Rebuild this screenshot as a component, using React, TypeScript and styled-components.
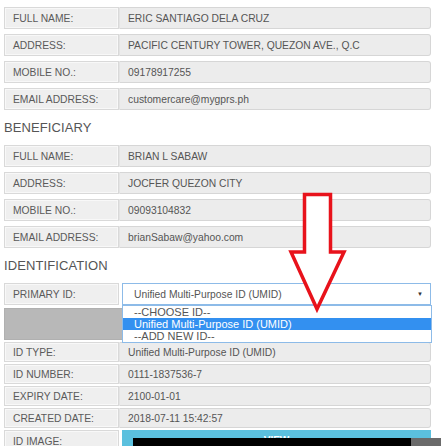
import React from "react";
import styled, { createGlobalStyle } from "styled-components";

const GlobalStyle = createGlobalStyle`
  html, body { margin: 0; padding: 0; background: #fff; overflow: hidden; }
  body { font-family: "Liberation Sans", Arial, sans-serif; }
`;

const Page = styled.div`
  position: relative;
  width: 441px;
  height: 446px;
  overflow: hidden;
  padding: 7px 10px 0 4px;
  box-sizing: border-box;
`;

const Fields = styled.div<{ $gap: number }>`
  display: flex;
  flex-direction: column;
  gap: ${(p) => p.$gap}px;
`;

const Row = styled.div<{ $h: number; $gap?: number }>`
  display: grid;
  grid-template-columns: 115px 1fr;
  column-gap: ${(p) => p.$gap ?? 0}px;
  height: ${(p) => p.$h}px;
`;

const Label = styled.div`
  display: flex;
  align-items: center;
  padding-left: 8px;
  box-sizing: border-box;
  border: 1px solid #d9d9d9;
  background: #efefef;
  box-shadow: inset 0 0 0 1px #f8f8f8;
  color: #5a5a5a;
  font-size: 10.3px;
  white-space: nowrap;
  overflow: hidden;
`;

const Value = styled.div`
  display: flex;
  align-items: center;
  padding-left: 8px;
  box-sizing: border-box;
  border: 1px solid #d6d6d6;
  border-left-color: #e4e4e4;
  border-radius: 0 3px 3px 0;
  background: #ececec;
  color: #555;
  font-size: 10.3px;
  white-space: nowrap;
  overflow: hidden;
`;

const Heading = styled.div`
  margin: 10px 0;
  font-size: 13px;
  line-height: 15px;
  color: #555;
  letter-spacing: 0.1px;
`;

const Select = styled.div`
  position: relative;
  display: flex;
  align-items: center;
  justify-content: space-between;
  box-sizing: border-box;
  padding: 0 7px 0 11px;
  border: 1px solid #8dbbe8;
  background: #fff;
  color: #555;
  font-size: 10.3px;
`;

const Caret = styled.span`
  font-size: 6px;
  color: #333;
`;

const OptionList = styled.div`
  position: absolute;
  top: calc(100% + 1px);
  left: -1px;
  right: -2px;
  border: 1px solid #8dbbe8;
  background: #fff;
  z-index: 2;
`;

const Option = styled.div<{ $active?: boolean }>`
  height: 12px;
  line-height: 12px;
  padding-left: 11px;
  font-size: 11px;
  white-space: nowrap;
  color: ${(p) => (p.$active ? "#fff" : "#555")};
  background: ${(p) => (p.$active ? "#3390f0" : "#fff")};
`;

const Panel = styled.div`
  margin-top: 3px;
  display: flex;
  flex-direction: column;
  gap: 2px;
`;

const PanelHead = styled.div`
  height: 32px;
  background: #b8b8b8;
  border: 1px solid #b0b0b0;
  box-sizing: border-box;
`;

const ViewButton = styled.div`
  margin-left: 3px;
  background: #5bc0de;
  color: #fff;
  font-size: 10px;
  font-weight: bold;
  text-align: center;
  line-height: 22px;
  height: 22px;
`;

const BottomStrip = styled.div`
  position: absolute;
  left: 133px;
  top: 438px;
  width: 308px;
  height: 8px;
  display: flex;
`;

const StripPart = styled.div<{ $w: number; $c: string }>`
  width: ${(p) => p.$w}px;
  background: ${(p) => p.$c};
`;

const ArrowSvg = styled.svg`
  position: absolute;
  left: 287px;
  top: 190px;
  width: 62px;
  height: 125px;
  pointer-events: none;
  z-index: 5;
`;

type F = [string, string];

const sender: F[] = [
  ["FULL NAME:", "ERIC SANTIAGO DELA CRUZ"],
  ["ADDRESS:", "PACIFIC CENTURY TOWER, QUEZON AVE., Q.C"],
  ["MOBILE NO.:", "09178917255"],
  ["EMAIL ADDRESS:", "customercare@mygprs.ph"],
];

const beneficiary: F[] = [
  ["FULL NAME:", "BRIAN L SABAW"],
  ["ADDRESS:", "JOCFER QUEZON CITY"],
  ["MOBILE NO.:", "09093104832"],
  ["EMAIL ADDRESS:", "brianSabaw@yahoo.com"],
];

const idRows: F[] = [
  ["ID TYPE:", "Unified Multi-Purpose ID (UMID)"],
  ["ID NUMBER:", "0111-1837536-7"],
  ["EXPIRY DATE:", "2100-01-01"],
  ["CREATED DATE:", "2018-07-11 15:42:57"],
];

function FieldGroup({ items }: { items: F[] }) {
  return (
    <Fields $gap={5}>
      {items.map(([l, v]) => (
        <Row $h={22} key={l}>
          <Label>{l}</Label>
          <Value>{v}</Value>
        </Row>
      ))}
    </Fields>
  );
}

export default function App() {
  return (
    <>
      <GlobalStyle />
      <Page>
        <FieldGroup items={sender} />
        <Heading>BENEFICIARY</Heading>
        <FieldGroup items={beneficiary} />
        <Heading>IDENTIFICATION</Heading>
        <Row $h={22} $gap={3}>
          <Label>PRIMARY ID:</Label>
          <Select>
            <span>Unified Multi-Purpose ID (UMID)</span>
            <Caret>▼</Caret>
            <OptionList>
              <Option>--CHOOSE ID--</Option>
              <Option $active>Unified Multi-Purpose ID (UMID)</Option>
              <Option>--ADD NEW ID--</Option>
            </OptionList>
          </Select>
        </Row>
        <Panel>
          <PanelHead />
          {idRows.map(([l, v]) => (
            <Row $h={20} key={l}>
              <Label>{l}</Label>
              <Value>{v}</Value>
            </Row>
          ))}
          <Row $h={22}>
            <Label>ID IMAGE:</Label>
            <ViewButton>VIEW</ViewButton>
          </Row>
        </Panel>
        <BottomStrip>
          <StripPart $w={278} $c="#000" />
          <StripPart $w={30} $c="#6a6a6a" />
        </BottomStrip>
        <ArrowSvg viewBox="0 0 62 125">
          <polygon
            points="17.5,4.5 43.5,4.5 43.5,62 57,62 30,119 4,62 17.5,62"
            fill="#fff"
            stroke="#e8121b"
            strokeWidth="3.5"
            strokeLinejoin="miter"
          />
        </ArrowSvg>
      </Page>
    </>
  );
}
